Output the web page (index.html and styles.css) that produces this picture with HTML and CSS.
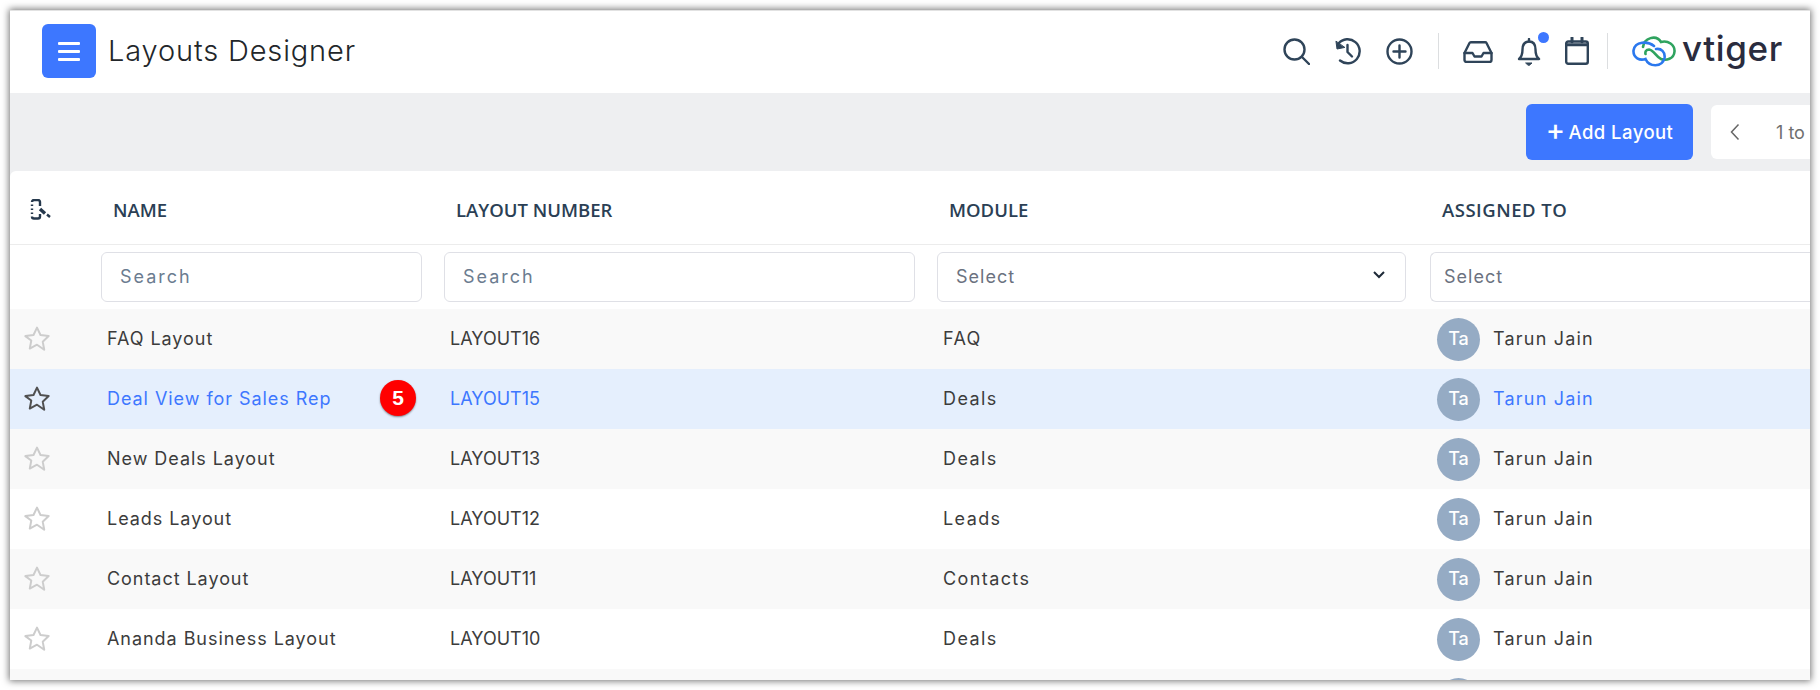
FILE: index.html
```html
<!DOCTYPE html>
<html lang="en">
<head>
<meta charset="utf-8">
<title>Layouts Designer</title>
<link rel="stylesheet" href="styles.css">
</head>
<body>
<svg class="defs" width="0" height="0" aria-hidden="true"><defs>
<path id="star" d="M12 2.2l3 6.4 7 .9-5.1 4.8 1.3 6.9L12 16.9l-6.2 3.3 1.3-6.9L2 9.5l7-.9z"/>
</defs></svg>
<div class="frame">
  <header class="topbar">
    <button class="menu-btn" aria-label="Menu"><span></span><span></span><span></span></button>
    <h1 class="title">Layouts Designer</h1>
    <div class="actions">
      <svg class="ico i-search" viewBox="0 0 27 27"><circle cx="11.5" cy="11.5" r="10"/><path d="M19 19l7 7"/></svg>
      <svg class="ico i-hist" viewBox="0 0 27 27"><path d="M4.5 5.5A12 12 0 1 1 6 22.5"/><path d="M2 3.5l1 7.5 7.5-1.5z" class="solid"/><path d="M13.5 7v7l4.5 4.5"/></svg>
      <svg class="ico i-plus" viewBox="0 0 27 27"><circle cx="13.5" cy="13.5" r="12"/><path d="M13.5 7.5v12M7.5 13.500h12"/></svg>
      <i class="sep sep-a"></i>
      <svg class="ico i-inbox" viewBox="0 0 30 22"><path d="M1.500 12L6.500 2a1.500 1.500 0 0 1 1.300-.8h14.400a1.500 1.500 0 0 1 1.300.8L28.500 12v7a2 2 0 0 1-2 2h-23a2 2 0 0 1-2-2z"/><path d="M1.500 12H9.500l2 3.500h7l2-3.500h8"/></svg>
      <span class="bell">
        <svg class="ico i-bell" viewBox="0 0 24 28"><path d="M2 21c2.500-2 3.500-4 3.500-9.500C5.500 6.500 8 3.500 12 3.500s6.500 3 6.500 8c0 5.500 1 7.500 3.500 9.500z"/><path d="M12 1v2.500"/><path d="M9 25h6l-3 2.500z" class="solid"/></svg>
        <i class="dot"></i>
      </span>
      <svg class="ico i-cal" viewBox="0 0 24 28"><rect x="1.200" y="4.500" width="21.600" height="22.300" rx="2"/><path d="M1.200 7.800h21.600" class="thick"/><path d="M7 .8v4M17 .8v4" class="thick"/></svg>
      <i class="sep sep-b"></i>
      <div class="logo">
        <svg class="cloud" viewBox="0 0 44 32">
          <path class="g" d="M11 12C12 3 24 -1 29 7C36 5 43 10 42.500 16.500C42 24 34 26 29 24C24 22 22 15 17 14.500C14 14.500 13 17 13.500 19"/>
          <path class="b" d="M22 11C16 6 3 6 1.500 15.500C1 23 8 26 13.500 24C17 32 30 33 32.500 23C33.500 17 29 13 24 14"/>
        </svg>
        <span class="wordmark">vtiger</span>
      </div>
      <i class="sep sep-c"></i>
    </div>
  </header>

  <div class="toolbar">
    <button class="add-btn"><b>+</b><span>Add Layout</span></button>
    <div class="pager"><span class="chev">
      <svg viewBox="0 0 10 18"><path d="M8.500 1.500L1.500 9l7 7.500"/></svg></span><span class="range">1 to</span></div>
  </div>

  <main class="table">
    <div class="row head">
      <div class="cell c-icon">
        <svg class="mobile" viewBox="0 0 21 21"><path d="M10 7V3a2 2 0 0 0-2-2H4a2 2 0 0 0-2 2" /><path d="M2 5.500v1.500M2 9.500v1.500M2 13.500v1.500" /><path d="M2 17.500a2 2 0 0 0 2 2h4a2 2 0 0 0 2-2V15"/><path d="M10 10l5 4.500" class="heavy"/><path d="M17 15.500l3 2.500"/></svg>
      </div>
      <div class="cell">NAME</div>
      <div class="cell">LAYOUT NUMBER</div>
      <div class="cell">MODULE</div>
      <div class="cell wide">ASSIGNED TO</div>
    </div>
    <div class="row filters">
      <div></div>
      <div class="fcell"><input class="field" placeholder="Search"></div>
      <div class="fcell"><input class="field" placeholder="Search"></div>
      <div class="fcell mod"><div class="field sel"><span>Select</span><svg viewBox="0 0 14 9"><path d="M2 2l5 5 5-5"/></svg></div></div>
      <div class="fcell last"><div class="field sel open"><span>Select</span></div></div>
    </div>

    <div class="row item alt">
      <div class="star-cell"><svg class="star" viewBox="0 0 24 24"><use href="#star"/></svg></div>
      <div class="txt">FAQ Layout</div><div class="txt num">LAYOUT16</div><div class="txt mdl">FAQ</div>
      <div class="owner"><span class="avatar">Ta</span><span class="who">Tarun Jain</span></div>
    </div>
    <div class="row item active">
      <div class="star-cell"><svg class="star" viewBox="0 0 24 24"><use href="#star"/></svg></div>
      <div class="txt">Deal View for Sales Rep<span class="badge">5</span></div><div class="txt num">LAYOUT15</div><div class="txt mdl plain">Deals</div>
      <div class="owner"><span class="avatar">Ta</span><span class="who">Tarun Jain</span></div>
    </div>
    <div class="row item alt">
      <div class="star-cell"><svg class="star" viewBox="0 0 24 24"><use href="#star"/></svg></div>
      <div class="txt">New Deals Layout</div><div class="txt num">LAYOUT13</div><div class="txt mdl">Deals</div>
      <div class="owner"><span class="avatar">Ta</span><span class="who">Tarun Jain</span></div>
    </div>
    <div class="row item">
      <div class="star-cell"><svg class="star" viewBox="0 0 24 24"><use href="#star"/></svg></div>
      <div class="txt">Leads Layout</div><div class="txt num">LAYOUT12</div><div class="txt mdl">Leads</div>
      <div class="owner"><span class="avatar">Ta</span><span class="who">Tarun Jain</span></div>
    </div>
    <div class="row item alt">
      <div class="star-cell"><svg class="star" viewBox="0 0 24 24"><use href="#star"/></svg></div>
      <div class="txt">Contact Layout</div><div class="txt num">LAYOUT11</div><div class="txt mdl">Contacts</div>
      <div class="owner"><span class="avatar">Ta</span><span class="who">Tarun Jain</span></div>
    </div>
    <div class="row item">
      <div class="star-cell"><svg class="star" viewBox="0 0 24 24"><use href="#star"/></svg></div>
      <div class="txt">Ananda Business Layout</div><div class="txt num">LAYOUT10</div><div class="txt mdl">Deals</div>
      <div class="owner"><span class="avatar">Ta</span><span class="who">Tarun Jain</span></div>
    </div>
    <div class="row item alt">
      <div></div><div></div><div></div><div></div>
      <div class="owner"><span class="avatar"></span></div>
    </div>
  </main>
</div>
</body>
</html>
```

FILE: styles.css
```css
* { box-sizing: border-box; }
html, body { margin: 0; height: 690px; overflow: hidden; background: #fff; }
body { padding: 10px 10px 10px 10px; font-family: Inter, "Open Sans", sans-serif; color: #3a3a3a; }
.defs { display: block; height: 0; }
.frame { height: 670px; background: #eeeff1; box-shadow: 0 0 7px 1px rgba(0,0,0,.55); overflow: hidden; display: flex; flex-direction: column; border-top: 1px solid #e2e2e2; }

.topbar { height: 82px; flex: none; background: #fff; display: flex; align-items: flex-start; }
.menu-btn { width: 54px; height: 54px; margin: 13px 0 0 32px; background: #3d77ff; border: 0; border-radius: 6px; display: flex; flex-direction: column; justify-content: center; align-items: center; gap: 5px; padding: 0; }
.menu-btn span { width: 22px; height: 3px; background: #fff; border-radius: 1px; }
.title { margin: 22px 0 0 12px; font-size: 29px; line-height: 36px; font-weight: 300; color: #22262a; letter-spacing: .85px; }
.actions { margin-left: auto; display: flex; align-items: flex-start; height: 82px; position: relative; width: 540px; padding-top: 27px; }
.ico { fill: none; stroke: #2f4459; stroke-width: 2.4; stroke-linecap: round; stroke-linejoin: round; display: block; flex: none; }
.ico .solid { fill: #2f4459; stroke-width: 1; }
.ico .thick { stroke-width: 3; }
.i-search { width: 27px; height: 27px; margin-left: 13px; }
.i-hist { width: 27px; height: 27px; margin-left: 24px; }
.i-plus { width: 27px; height: 27px; margin-left: 25px; }
.sep { width: 1px; height: 36px; background: #dcdee0; flex: none; margin-top: -5px; display: block; }
.sep-a { margin-left: 25px; }
.i-inbox { width: 30px; height: 22px; margin: 3px 0 0 24px; }
.bell { position: relative; margin-left: 24px; width: 24px; height: 28px; display: block; flex: none; }
.i-bell { width: 24px; height: 28px; }
.dot { position: absolute; right: -8px; top: -6px; width: 11px; height: 11px; border-radius: 50%; background: #3d77ff; }
.i-cal { width: 24px; height: 28px; margin: -1px 0 0 24px; }
.sep-b { margin-left: 18px; }
.logo { display: flex; align-items: center; margin: -3px 0 0 24px; height: 32px; flex: none; width: 175px; }
.cloud { width: 44px; height: 32px; fill: none; stroke-width: 2.6; stroke-linecap: round; flex: none; }
.cloud .g { stroke: #2fa35f; }
.cloud .b { stroke: #2b78ee; }
.wordmark { font-size: 35px; line-height: 32px; font-weight: 500; color: #2a2c3e; margin: -6px 0 0 6px; letter-spacing: .6px; }
.sep-c { margin-left: 25px; }

.toolbar { height: 78px; flex: none; display: flex; align-items: flex-start; justify-content: flex-end; padding-top: 11px; }
.add-btn { width: 167px; height: 56px; background: #3d77ff; color: #fff; border: 0; border-radius: 6px; font: 500 18.500px/56px Inter, sans-serif; padding: 0; margin-right: 18px; display: flex; align-items: center; justify-content: center; gap: 3px; letter-spacing: .45px; }
.add-btn b { font-size: 29px; font-weight: 500; line-height: 50px; margin-top: -4px; }
.pager { width: 99px; height: 54px; margin-top: 1px; background: #fff; border-radius: 6px 0 0 6px; display: flex; align-items: center; padding-left: 19px; color: #6f6f6f; font-size: 18px; overflow: hidden; }
.chev svg { display: block; width: 10px; height: 18px; fill: none; stroke: #666; stroke-width: 1.500; }
.range { margin-left: 36px; white-space: nowrap; }

.table { flex: 1; background: #fff; border-radius: 6px 0 0 0; overflow: hidden; }
.row { display: grid; grid-template-columns: 85px 343px 493px 493px 1fr; align-items: center; }
.head { height: 74px; border-bottom: 1px solid #ececec; font: 600 18.500px "Open Sans", sans-serif; color: #2b3f55; }
.head .cell { padding: 3px 0 0 18px; }
.head .wide { letter-spacing: .5px; }
.head .c-icon { padding: 3px 0 0 20px; }
.mobile { display: block; width: 21px; height: 21px; fill: none; stroke: #26394d; stroke-width: 2.4; }
.mobile .heavy { stroke-width: 3.4; }
.filters { height: 64px; align-items: start; padding-top: 7px; }
.fcell { padding: 0 16px 0 6px; }
.fcell.mod { padding-right: 18px; }
.fcell.last { padding-right: 0; }
.field { display: block; width: 100%; height: 50px; border: 1px solid #dfe0e6; border-radius: 6px; background: #fff; font: 400 18px Inter, sans-serif; color: #6b7280; padding: 0 18px 2px; outline: 0; letter-spacing: 1px; }
input.field { letter-spacing: 2px; }
.field::placeholder { color: #6b7c90; opacity: 1; }
.sel { display: flex; align-items: center; justify-content: space-between; }
.sel svg { width: 14px; height: 9px; fill: none; stroke: #1e2a38; stroke-width: 2; margin: -4px 1px 0 0; }
.sel.open { padding-left: 13px; border-radius: 6px 0 0 6px; border-right: 0; }

.item { height: 60px; background: #fff; font-size: 18px; color: #3c3c3c; letter-spacing: .95px; }
.item.alt { background: #f9f9f9; }
.item.active { background: #e5effd; color: #3d77ff; }
.item.active .plain { color: #3c3c3c; }
.star-cell { padding-left: 13px; display: flex; }
.star { width: 28px; height: 28px; fill: none; stroke: #cdcdcd; stroke-width: 1.700; stroke-linejoin: round; }
.active .star { stroke: #505050; }
.txt { padding: 0 0 2px 12px; position: relative; white-space: nowrap; }
.txt.num { letter-spacing: 0; }
.txt.mdl { letter-spacing: 1.4px; }
.who { padding-bottom: 2px; letter-spacing: 1.2px; }
.badge { position: absolute; left: 285px; top: 50%; margin-top: -19px; width: 36px; height: 36px; border-radius: 50%; background: #f00; color: #fff; font: 700 21px/36px "Liberation Sans", sans-serif; text-align: center; letter-spacing: 0; box-shadow: 0 1px 2px rgba(0,0,0,.45); }
.owner { display: flex; align-items: center; padding-left: 13px; gap: 13px; }
.avatar { width: 43px; height: 43px; border-radius: 50%; background: #95abc4; color: #fff; font-size: 18px; font-weight: 500; letter-spacing: 0; display: flex; align-items: center; justify-content: center; flex: none; padding-bottom: 1px; }
```
